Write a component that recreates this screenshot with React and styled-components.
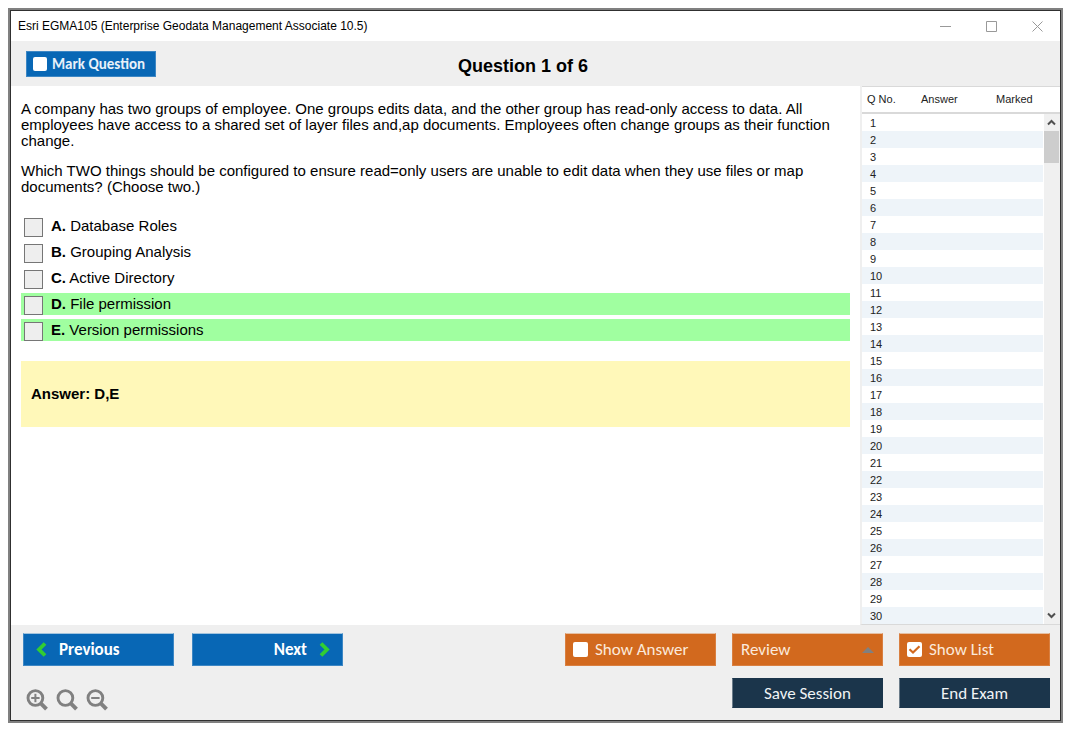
import React, { useState } from "react";
import styled, { createGlobalStyle } from "styled-components";

const GlobalStyle = createGlobalStyle`
  * {
    box-sizing: border-box;
  }

  body {
    margin: 0;
    background: #fff;
    color: #000;
    font-family: "Liberation Sans", Arial, sans-serif;
  }

  button, input {
    font-family: inherit;
    margin: 0;
  }
`;

const Page = styled.div`
  display: flex;
  min-height: 100vh;
  padding: 8px 12px 12px 8px;
`;

const Frame = styled.div`
  flex: 1;
  display: flex;
  border: 2px solid #808080;
`;

const Window = styled.div`
  flex: 1;
  min-width: 0;
  display: flex;
  flex-direction: column;
  border: 1px solid #303030;
  background: #fff;
`;

const TitleBar = styled.header`
  display: flex;
  align-items: center;
  justify-content: space-between;
  height: 30px;
  padding: 0 0 0 7px;
  font-size: 12px;
`;

const WindowControls = styled.div`
  display: flex;
`;

const WindowButton = styled.button`
  display: flex;
  align-items: center;
  justify-content: center;
  width: 46px;
  height: 28px;
  padding: 0;
  border: none;
  background: none;
  color: #999;
`;

const Toolbar = styled.div`
  display: grid;
  grid-template-columns: 1fr auto 1fr;
  align-items: center;
  height: 45px;
  padding: 0 40px 0 15px;
  background: #efefef;
`;

const MarkLabel = styled.label`
  display: flex;
  align-items: center;
  justify-self: start;
  gap: 5px;
  width: 130px;
  height: 26px;
  padding: 0 6px;
  border: 1px solid #3d87c4;
  background: #0867b5;
  color: #e8f1f9;
  font-family: Carlito, Calibri, Lato, sans-serif;
  font-size: 15px;
  font-weight: 700;
`;

const QuestionTitle = styled.h1`
  margin: 0;
  padding-top: 4px;
  font-size: 18px;
  font-weight: 700;
  line-height: 20px;
`;

const Main = styled.main`
  flex: 1;
  display: flex;
`;

const Content = styled.section`
  flex: 1;
  min-width: 0;
  padding: 15px 10px;
  font-size: 15px;
  line-height: 16px;
`;

const Paragraph = styled.p`
  margin: 0 0 14px;
`;

const Options = styled.div`
  display: flex;
  flex-direction: column;
  gap: 4px;
  margin: 20px 0;
`;

const Option = styled.label`
  display: flex;
  align-items: center;
  gap: 8px;
  height: 22px;
  padding-left: 3px;
  background: ${(props) => (props.$correct ? "#a0ffa0" : "transparent")};
`;

const OptionBox = styled.input`
  appearance: none;
  align-self: flex-end;
  width: 19px;
  height: 19px;
  border: 1px solid #767676;
  background: ${(props) => (props.checked ? "#767676" : "#eee")};
`;

const AnswerBox = styled.div`
  padding: 25px 10px;
  background: #fff8b9;
  font-weight: 700;
`;

const ListPanel = styled.aside`
  display: flex;
  width: 200px;
  border-left: 2px solid #efefef;
  border-bottom: 1px solid #d9d9d9;
`;

const QuestionTable = styled.table`
  flex: 1;
  border-spacing: 0;
  table-layout: fixed;
  font-size: 11px;
  line-height: 15px;
`;

const HeadCell = styled.th`
  width: ${(props) => props.$width};
  height: 28px;
  padding: 0 0 0 5px;
  border-top: 1px solid #d9d9d9;
  border-bottom: 2px solid #d9d9d9;
  color: #222;
  font-weight: 400;
  text-align: left;
`;

const Row = styled.tr`
  height: 17px;

  &:nth-child(even) {
    background: #eef4f9;
  }
`;

const Cell = styled.td`
  height: 17px;
  padding: 2px 0 0 8px;
  color: #222;
`;

const ScrollColumn = styled.div`
  display: flex;
  flex-direction: column;
  width: 17px;
`;

const ScrollHead = styled.div`
  height: 28px;
  border-top: 1px solid #d9d9d9;
  border-bottom: 2px solid #d9d9d9;
`;

const ScrollTrack = styled.div`
  flex: 1;
  display: flex;
  flex-direction: column;
  margin-left: 1px;
  background: #f0f0f0;
`;

const ScrollButton = styled.button`
  display: flex;
  align-items: center;
  justify-content: center;
  width: 15px;
  height: 17px;
  padding: 0;
  border: none;
  background: none;
  color: #505050;
`;

const ScrollThumb = styled.div`
  width: 15px;
  height: 32px;
  margin-bottom: auto;
  background: #cdcdcd;
`;

const Footer = styled.footer`
  display: flex;
  align-items: flex-start;
  justify-content: space-between;
  padding: 8px 10px 9px 12px;
  background: #efefef;
`;

const FooterSide = styled.div`
  display: flex;
  flex-direction: column;
  gap: 23px;
`;

const NavButtons = styled.div`
  display: flex;
  gap: 18px;
`;

const NavButton = styled.button`
  display: flex;
  align-items: center;
  justify-content: ${(props) => (props.$end ? "flex-end" : "flex-start")};
  gap: 12px;
  width: 151px;
  height: 33px;
  padding: 0 12px;
  border: 1px solid #3d87c4;
  border-top-color: #a3c4de;
  background: #0867b5;
  color: #fff;
  font-family: Carlito, Calibri, Lato, sans-serif;
  font-size: 17px;
  font-weight: 700;
`;

const ZoomButtons = styled.div`
  display: flex;
  gap: 8px;
  padding-left: 3px;
`;

const ZoomButton = styled.button`
  display: flex;
  width: 22px;
  height: 22px;
  padding: 0;
  border: none;
  background: none;
  color: #808080;
`;

const Actions = styled.div`
  display: grid;
  grid-template-columns: repeat(3, 151px);
  gap: 12px 16px;
`;

const ToggleLabel = styled.label`
  display: flex;
  align-items: center;
  gap: 7px;
  height: 33px;
  padding: 0 7px;
  border: 1px solid #d97f40;
  border-top-color: #e5bfa3;
  background: #d2691e;
  color: #fbe9dc;
  font-family: Carlito, Calibri, Lato, sans-serif;
  font-size: 17px;
`;

const ReviewButton = styled.button`
  display: flex;
  align-items: center;
  justify-content: space-between;
  height: 33px;
  padding: 0 8px;
  border: 1px solid #d97f40;
  border-top-color: #e5bfa3;
  background: #d2691e;
  color: #fbe9dc;
  font-family: Carlito, Calibri, Lato, sans-serif;
  font-size: 17px;
`;

const DarkButton = styled.button`
  grid-column: ${(props) => props.$column};
  height: 30px;
  padding: 0;
  border: 1px solid #1b354b;
  border-left-color: #6b7c8a;
  background: #1b354b;
  color: #f0f3f5;
  font-family: Carlito, Calibri, Lato, sans-serif;
  font-size: 17px;
`;

const TickWrap = styled.span`
  display: grid;
  width: ${(props) => props.$size};
  height: ${(props) => props.$size};

  > * {
    grid-area: 1 / 1;
  }
`;

const TickInput = styled.input`
  appearance: none;
  width: 100%;
  height: 100%;
  border-radius: 2px;
  background: #fff;
`;

const TickBox = ({ id, size, checked, onChange }) => (
  <TickWrap $size={size}>
    <TickInput
      id={id}
      type="checkbox"
      checked={checked}
      onChange={(e) => onChange(e.target.checked)}
    />
    {checked && (
      <svg width="15" height="15" viewBox="0 0 15 15" fill="none" pointerEvents="none">
        <path d="M2.5 7.2 L6 10.5 L12.5 4.2" stroke="#d2691e" strokeWidth="2.2" />
      </svg>
    )}
  </TickWrap>
);

const ZoomIcon = ({ sign }) => (
  <svg width="22" height="22" viewBox="0 0 22 22" fill="none" stroke="currentColor">
    <circle cx="9.4" cy="9" r="7.4" strokeWidth="2.9" />
    <path d="M14.3 13.9 L20.5 20.1" strokeWidth="4" />
    {sign && <path d="M5.2 9 H13.6" strokeWidth="2" />}
    {sign === "plus" && <path d="M9.4 4.8 V13.2" strokeWidth="2" />}
  </svg>
);

const Chevron = ({ d }) => (
  <svg width="11" height="15" viewBox="0 0 11 15" fill="none">
    <path d={d} stroke="#32cd32" strokeWidth="3.8" />
  </svg>
);

const options = [
  { letter: "A", text: "Database Roles" },
  { letter: "B", text: "Grouping Analysis" },
  { letter: "C", text: "Active Directory" },
  { letter: "D", text: "File permission", correct: true },
  { letter: "E", text: "Version permissions", correct: true },
];

const questionNumbers = Array.from({ length: 30 }, (_, i) => i + 1);

const App = () => {
  const [marked, setMarked] = useState(false);
  const [showAnswer, setShowAnswer] = useState(false);
  const [showList, setShowList] = useState(true);
  const [selected, setSelected] = useState([]);

  const toggleOption = (letter) => {
    if (selected.includes(letter)) {
      setSelected(selected.filter((item) => item !== letter));
    } else {
      setSelected([...selected, letter]);
    }
  };

  return (
    <Page>
      <GlobalStyle />
      <Frame>
        <Window>
          <TitleBar>
            <span>Esri EGMA105 (Enterprise Geodata Management Associate 10.5)</span>
            <WindowControls>
              <WindowButton aria-label="Minimize">
                <svg width="11" height="11" stroke="currentColor">
                  <path d="M0 5.5 H11" />
                </svg>
              </WindowButton>
              <WindowButton aria-label="Maximize">
                <svg width="11" height="11" fill="none" stroke="currentColor">
                  <path d="M0.5 0.5 H10.5 V10.5 H0.5 Z" />
                </svg>
              </WindowButton>
              <WindowButton aria-label="Close">
                <svg width="11" height="11" stroke="currentColor">
                  <path d="M0.5 0.5 L10.5 10.5 M10.5 0.5 L0.5 10.5" />
                </svg>
              </WindowButton>
            </WindowControls>
          </TitleBar>

          <Toolbar>
            <MarkLabel htmlFor="mark">
              <TickBox id="mark" size="14px" checked={marked} onChange={setMarked} />
              Mark Question
            </MarkLabel>
            <QuestionTitle>Question 1 of 6</QuestionTitle>
          </Toolbar>

          <Main>
            <Content>
              <Paragraph>
                A company has two groups of employee. One groups edits data, and the
                other group has read-only access to data. All employees have access to
                a shared set of layer files and,ap documents. Employees often change
                groups as their function change.
              </Paragraph>
              <Paragraph>
                Which TWO things should be configured to ensure read=only users are
                unable to edit data when they use files or map documents? (Choose two.)
              </Paragraph>
              <Options>
                {options.map((option) => (
                  <Option
                    key={option.letter}
                    htmlFor={`option-${option.letter}`}
                    $correct={option.correct}
                  >
                    <OptionBox
                      id={`option-${option.letter}`}
                      type="checkbox"
                      checked={selected.includes(option.letter)}
                      onChange={() => toggleOption(option.letter)}
                    />
                    <span>
                      <b>{option.letter}.</b> {option.text}
                    </span>
                  </Option>
                ))}
              </Options>
              <AnswerBox>Answer: D,E</AnswerBox>
            </Content>

            {showList && (
              <ListPanel>
                <QuestionTable>
                  <thead>
                    <tr>
                      <HeadCell $width="54px">Q No.</HeadCell>
                      <HeadCell $width="75px">Answer</HeadCell>
                      <HeadCell>Marked</HeadCell>
                    </tr>
                  </thead>
                  <tbody>
                    {questionNumbers.map((number) => (
                      <Row key={number}>
                        <Cell>{number}</Cell>
                        <Cell />
                        <Cell />
                      </Row>
                    ))}
                  </tbody>
                </QuestionTable>
                <ScrollColumn>
                  <ScrollHead />
                  <ScrollTrack>
                    <ScrollButton aria-label="Scroll up">
                      <svg width="9" height="7" fill="none" stroke="currentColor">
                        <path d="M1 5.5 L4.5 2 L8 5.5" strokeWidth="2" />
                      </svg>
                    </ScrollButton>
                    <ScrollThumb />
                    <ScrollButton aria-label="Scroll down">
                      <svg width="9" height="7" fill="none" stroke="currentColor">
                        <path d="M1 1.5 L4.5 5 L8 1.5" strokeWidth="2" />
                      </svg>
                    </ScrollButton>
                  </ScrollTrack>
                </ScrollColumn>
              </ListPanel>
            )}
          </Main>

          <Footer>
            <FooterSide>
              <NavButtons>
                <NavButton>
                  <Chevron d="M9 1.5 L3 7.5 L9 13.5" />
                  Previous
                </NavButton>
                <NavButton $end>
                  Next
                  <Chevron d="M2 1.5 L8 7.5 L2 13.5" />
                </NavButton>
              </NavButtons>
              <ZoomButtons>
                <ZoomButton aria-label="Zoom in">
                  <ZoomIcon sign="plus" />
                </ZoomButton>
                <ZoomButton aria-label="Reset zoom">
                  <ZoomIcon />
                </ZoomButton>
                <ZoomButton aria-label="Zoom out">
                  <ZoomIcon sign="minus" />
                </ZoomButton>
              </ZoomButtons>
            </FooterSide>
            <Actions>
              <ToggleLabel htmlFor="show-answer">
                <TickBox
                  id="show-answer"
                  size="15px"
                  checked={showAnswer}
                  onChange={setShowAnswer}
                />
                Show Answer
              </ToggleLabel>
              <ReviewButton aria-haspopup="menu">
                Review
                <svg width="12" height="6" viewBox="0 0 12 6">
                  <path d="M0 6 L6 0 L12 6 Z" fill="#808080" />
                </svg>
              </ReviewButton>
              <ToggleLabel htmlFor="show-list">
                <TickBox
                  id="show-list"
                  size="15px"
                  checked={showList}
                  onChange={setShowList}
                />
                Show List
              </ToggleLabel>
              <DarkButton $column="2">Save Session</DarkButton>
              <DarkButton $column="3">End Exam</DarkButton>
            </Actions>
          </Footer>
        </Window>
      </Frame>
    </Page>
  );
};

export default App;
